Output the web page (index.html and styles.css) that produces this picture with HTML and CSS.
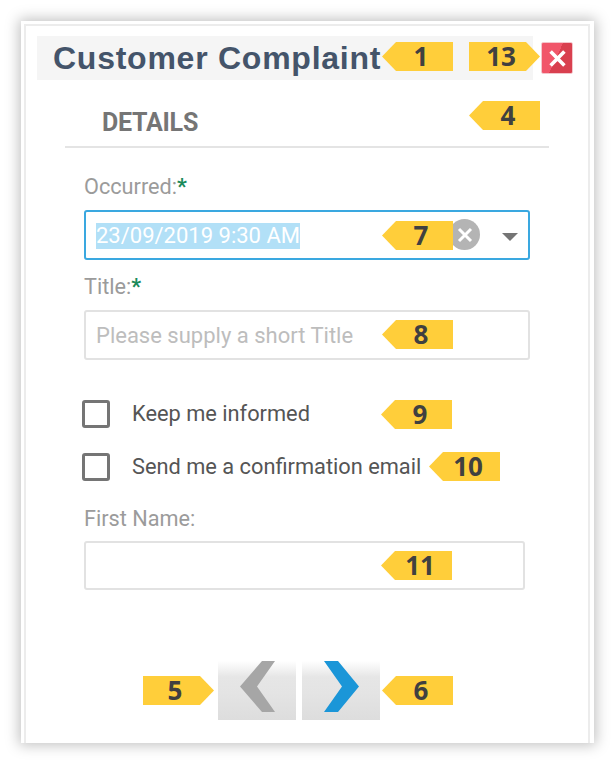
FILE: index.html
```html
<!DOCTYPE html>
<html lang="en">
<head>
<meta charset="UTF-8" />
<title>Customer Complaint</title>
<link rel="stylesheet" href="styles.css">
</head>
<body>
  <section class="window">
    <div class="window-inner">
      <header class="title-row">
        <h1 class="title-bar">Customer Complaint</h1>
        <button class="close-btn" type="button" aria-label="Close">
          <svg viewBox="0 0 16 16" aria-hidden="true">
            <path d="M1.5 1.5 14.5 14.5M14.5 1.5 1.5 14.5"></path>
          </svg>
        </button>
      </header>

      <h2 class="section-head">DETAILS</h2>

      <form class="form">
        <label class="field-label label-occurred">Occurred:<span class="req">*</span></label>
        <div class="input date-input">
          <span class="selected">23/09/2019 9:30 AM</span>
          <span class="clear-btn">
            <svg viewBox="0 0 12 12" aria-hidden="true"><path d="M2 2 10 10M10 2 2 10"></path></svg>
          </span>
          <span class="caret"></span>
        </div>

        <label class="field-label label-title">Title:<span class="req">*</span></label>
        <div class="input placeholder">Please supply a short Title</div>

        <label class="check check-first"><span class="box"></span>Keep me informed</label>
        <label class="check check-second"><span class="box"></span>Send me a confirmation email</label>

        <label class="field-label label-name">First Name:</label>
        <div class="input input-short"></div>
      </form>

      <nav class="pager">
        <button class="nav-btn" type="button" aria-label="Previous">
          <svg viewBox="0 0 35 51" aria-hidden="true"><polygon class="prev" points="35,0 22,0 0,25.5 22,51 35,51 17,25.5"></polygon></svg>
        </button>
        <button class="nav-btn" type="button" aria-label="Next">
          <svg viewBox="0 0 35 51" aria-hidden="true"><polygon class="next" points="0,0 14,0 35,25.5 14,51 0,51 18,25.5"></polygon></svg>
        </button>
      </nav>
    </div>
  </section>

  <!-- callout tags -->
  <span class="tag tag-left t1">1</span>
  <span class="tag tag-right t13">13</span>
  <span class="tag tag-left t4">4</span>
  <span class="tag tag-left t7">7</span>
  <span class="tag tag-left t8">8</span>
  <span class="tag tag-left t9">9</span>
  <span class="tag tag-left t10">10</span>
  <span class="tag tag-left t11">11</span>
  <span class="tag tag-right t5">5</span>
  <span class="tag tag-left t6">6</span>
</body>
</html>
```

FILE: styles.css
```css
*, *::before, *::after {
  box-sizing: border-box;
}

html, body {
  height: 764px;
  overflow: hidden;
}

body {
  margin: 0;
  position: relative;
  background: #fff;
  font-family: Roboto, sans-serif;
}

/* Window frame */
.window {
  width: 573px;
  height: 722px;
  margin: 21px 0 0 21px;
  padding: 3px 4px 0 3px;
  background: #fff;
  box-shadow: 0 0 13px 2px rgb(0 0 0 / 0.25);
}

.window-inner {
  height: 100%;
  border: 2px solid #ececec;
  border-bottom: none;
  padding: 10px 0 0 11px;
}

.title-row {
  display: flex;
  align-items: center;
  gap: 8px;
}

.title-bar {
  width: 496px;
  height: 44px;
  margin: 0;
  padding-left: 16px;
  background: #f5f5f5;
  color: #44546a;
  font-family: "Liberation Sans", Arial, sans-serif;
  font-size: 32px;
  font-weight: 700;
  line-height: 45px;
  letter-spacing: 0.75px;
  white-space: nowrap;
}

.close-btn {
  width: 32px;
  height: 32px;
  padding: 0;
  border: 1px solid #f4c6cc;
  border-radius: 2px;
  background: linear-gradient(115deg, #f1566a 0 48%, #d9404f 48% 100%);
  display: flex;
  align-items: center;
  justify-content: center;
}

.close-btn svg {
  width: 17px;
  height: 17px;
  stroke: #fff;
  stroke-width: 3.4;
  fill: none;
}

.section-head {
  margin: 0 0 0 28px;
  width: 484px;
  height: 68px;
  padding: 29px 0 0 37px;
  border-bottom: 2px solid #e4e4e4;
  color: #757575;
  font-size: 25px;
  font-weight: 700;
  line-height: 28px;
  letter-spacing: -0.25px;
}

.form {
  display: flex;
  flex-direction: column;
  align-items: flex-start;
  padding-left: 47px;
}

.field-label {
  color: #9b9b9b;
  font-size: 21.7px;
  line-height: 24px;
}

.label-occurred {
  margin-top: 27px;
  margin-bottom: 11px;
}

.label-title {
  margin-top: 15px;
  margin-bottom: 11px;
}

.label-name {
  margin-top: 26px;
  margin-bottom: 10px;
}

.req {
  color: #1b8a5a;
  font-weight: 700;
}

.input {
  width: 446px;
  height: 50px;
  padding: 0 10px;
  border: 2px solid #e2e2e2;
  border-radius: 3px;
  display: flex;
  align-items: center;
  font-size: 22px;
}

.input-short {
  width: 441px;
  height: 49px;
}

.placeholder {
  color: #bdbdbd;
}

.date-input {
  border-color: #3aa8e0;
  position: relative;
}

.selected {
  margin-top: 2px;
  background: #b2e0f7;
  color: #fff;
  line-height: 26px;
  white-space: nowrap;
}

.clear-btn {
  position: absolute;
  left: 363px;
  top: 7px;
  width: 31px;
  height: 31px;
  border-radius: 50%;
  background: #b4b4b4;
  display: flex;
  align-items: center;
  justify-content: center;
}

.clear-btn svg {
  width: 18px;
  height: 18px;
  stroke: #fff;
  stroke-width: 2;
  fill: none;
}

.caret {
  position: absolute;
  left: 416px;
  top: 21px;
  width: 0;
  height: 0;
  border-left: 8px solid transparent;
  border-right: 8px solid transparent;
  border-top: 8px solid #757575;
}

/* Checkboxes */
.check {
  display: flex;
  align-items: center;
  gap: 22px;
  margin-left: -2px;
  color: #555;
  font-size: 21.8px;
  line-height: 28px;
  white-space: nowrap;
}

.check-first {
  margin-top: 40px;
}

.check-second {
  margin-top: 25px;
}

.box {
  width: 28px;
  height: 28px;
  border: 3px solid #757575;
  border-radius: 3px;
}

/* Pager */
.pager {
  display: flex;
  justify-content: center;
  gap: 6px;
  margin: 71px 0 0 72px;
  width: 380px;
}

.nav-btn {
  width: 78px;
  height: 59px;
  padding: 0;
  border: none;
  background: linear-gradient(#fff 0, #e6e6e6 16px, #e4e4e4 32px, #dddddd 100%);
  display: flex;
  align-items: flex-start;
  justify-content: center;
}

.nav-btn svg {
  width: 35px;
  height: 51px;
}

.prev {
  fill: #a6a6a6;
}

.next {
  fill: #1b96d8;
}

/* Callout tags */
.tag {
  position: absolute;
  width: 71px;
  height: 29px;
  background: #ffce3a;
  color: #404040;
  font-family: "Open Sans", sans-serif;
  font-size: 26px;
  font-weight: 700;
  line-height: 29px;
  text-align: center;
}

.tag-left {
  padding-left: 7px;
  clip-path: polygon(14px 0, 100% 0, 100% 100%, 14px 100%, 0 50%);
}

.tag-right {
  padding-right: 7px;
  clip-path: polygon(0 0, calc(100% - 14px) 0, 100% 50%, calc(100% - 14px) 100%, 0 100%);
}

.t1 { left: 382px; top: 42px; }
.t13 { left: 469px; top: 42px; }
.t4 { left: 469px; top: 101px; }
.t7 { left: 382px; top: 221px; }
.t8 { left: 382px; top: 320px; }
.t9 { left: 381px; top: 400px; }
.t10 { left: 429px; top: 452px; }
.t11 { left: 381px; top: 551px; }
.t5 { left: 143px; top: 676px; }
.t6 { left: 382px; top: 676px; }
```
